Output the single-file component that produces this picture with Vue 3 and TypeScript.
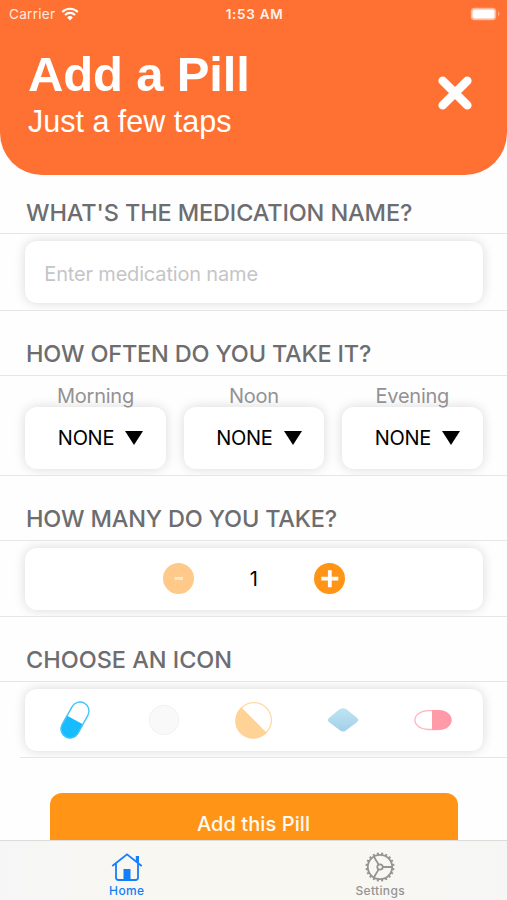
<script setup lang="ts">
import { ref } from 'vue'

const medication = ref('')
const count = ref(1)
const selectedIcon = ref('capsule')
const times: string[] = ['Morning', 'Noon', 'Evening']
const icons: string[] = ['capsule', 'round', 'split', 'diamond', 'oval']

const teeth: number[] = Array.from({ length: 20 }, (_, i) => i * 18 + 9)

function changeCount(delta: number): void {
  count.value = Math.max(1, count.value + delta)
}
</script>

<template>
  <div class="screen">
    <header class="hero">
      <div class="status">
        <div class="carrier">
          <span>Carrier</span>
          <svg class="wifi" viewBox="0 0 18 14" width="18" height="14">
            <path d="M1.2 5 A11 11 0 0 1 16.8 5" />
            <path d="M4 8 A7 7 0 0 1 14 8" />
            <path class="dot" d="M9 13.4 L6.1 10.4 A4.2 4.2 0 0 1 11.9 10.4 Z" />
          </svg>
        </div>
        <span class="clock">1:53 AM</span>
        <svg class="battery" viewBox="0 0 30 14" width="30" height="14">
          <rect x=".8" y=".8" width="25.4" height="12.4" rx="3.8" />
          <rect class="level" x="2.5" y="2.5" width="22" height="9" rx="2" />
          <path d="M28 4.8 Q30.6 7 28 9.2 Z" />
        </svg>
      </div>
      <div class="heading">
        <div>
          <h1>Add a Pill</h1>
          <p>Just a few taps</p>
        </div>
        <button class="close" aria-label="Close">
          <svg viewBox="0 0 34 34" width="34" height="34"><path d="M4.7 4.7 L29.3 29.3 M29.3 4.7 L4.7 29.3" /></svg>
        </button>
      </div>
    </header>

    <main class="form">
      <h2 class="q-name">What's the medication name?</h2>
      <div class="row name">
        <div class="card field">
          <input v-model="medication" placeholder="Enter medication name" />
        </div>
      </div>

      <h2 class="q-often">How often do you take it?</h2>
      <div class="row times">
        <div v-for="time in times" :key="time" class="time">
          <span class="label">{{ time }}</span>
          <button class="card select">
            <span>NONE</span>
            <svg viewBox="0 0 18 14" width="18" height="14"><path d="M0 0 H18 L9 14 Z" /></svg>
          </button>
        </div>
      </div>

      <h2 class="q-many">How many do you take?</h2>
      <div class="row">
        <div class="card stepper">
          <button class="step" :class="{ disabled: count <= 1 }" aria-label="Less" @click="changeCount(-1)">
            <svg viewBox="0 0 31 31" width="31" height="31"><path class="minus" d="M11.5 15.5 H20" /></svg>
          </button>
          <span class="count">{{ count }}</span>
          <button class="step" aria-label="More" @click="changeCount(1)">
            <svg viewBox="0 0 31 31" width="31" height="31"><path d="M7.3 15.7 H24.3 M15.8 7.2 V24.2" /></svg>
          </button>
        </div>
      </div>

      <h2 class="q-icon">Choose an icon</h2>
      <div class="row last">
        <div class="card icons">
          <button v-for="icon in icons" :key="icon" :aria-label="icon" @click="selectedIcon = icon">
            <svg v-if="icon === 'capsule'" viewBox="0 0 40 40" width="40" height="40">
              <g transform="translate(20 20) rotate(29)">
                <path d="M-9.5 0 V10 A9.5 9.5 0 0 0 9.5 10 V0 Z" fill="#17bcff" />
                <rect x="-9" y="-19.3" width="18" height="38.6" rx="9" fill="none" stroke="#42c4fb" stroke-width="1.4" />
              </g>
            </svg>
            <svg v-else-if="icon === 'round'" viewBox="0 0 40 40" width="40" height="40">
              <circle cx="20" cy="20" r="14.8" fill="#f9f9f9" stroke="#f1f1f1" />
            </svg>
            <svg v-else-if="icon === 'split'" viewBox="0 0 40 40" width="40" height="40">
              <circle cx="20" cy="20" r="17.4" fill="#fff" stroke="#ffdaaa" stroke-width="1.3" />
              <path d="M7.3 7.3 A18 18 0 1 0 32.7 32.7 Z" fill="#ffd296" />
            </svg>
            <svg v-else-if="icon === 'diamond'" viewBox="0 0 40 40" width="40" height="40">
              <defs>
                <linearGradient id="gem" x1="0" y1="0" x2="0" y2="1">
                  <stop offset="0" stop-color="#bde5f3" />
                  <stop offset="1" stop-color="#a4cfe8" />
                </linearGradient>
              </defs>
              <path d="M16.5 9.3 Q20 7 23.5 9.3 L33.5 17.4 Q36.8 20 33.5 22.5 L23.5 30 Q20 33 16.5 30 L6.5 22.5 Q3.2 20 6.5 17.4 Z" fill="url(#gem)" />
            </svg>
            <svg v-else viewBox="0 0 40 40" width="40" height="40">
              <rect x="1.9" y="10.7" width="36.2" height="18.8" rx="13" ry="9.4" fill="#fff" stroke="#ffb3bd" stroke-width="1.3" />
              <path d="M19 10.1 H25 C43 10.1 43 30.1 25 30.1 H19 Z" fill="#ff9ba9" />
            </svg>
          </button>
        </div>
      </div>

      <button class="submit"><span>Add this Pill</span></button>
    </main>

    <nav class="tabs">
      <a class="tab active">
        <svg viewBox="0 0 32 30" width="32" height="30">
          <path d="M1.3 14 L16 2.3 L30.7 14 M5 11.5 V25.5 Q5 28 7.5 28 H24.5 Q27 28 27 25.5 V11.5 M26.3 10 V4.5" />
          <path class="solid" d="M12.5 17 H19.5 V28 H12.5 Z M24.8 4 H28 V11 L24.8 8.7 Z" />
        </svg>
        <span>Home</span>
      </a>
      <a class="tab">
        <svg viewBox="0 0 32 30" width="32" height="30">
          <g transform="translate(16 15)">
            <circle r="12.2" />
            <circle r="2.7" />
            <path d="M3 0 H12 M-1.5 -2.6 L-6.2 -10.5 M-1.5 2.6 L-6.2 10.5" />
            <path v-for="angle in teeth" :key="angle" class="tooth" d="M12.3 0 H14.5" :transform="`rotate(${angle})`" />
          </g>
        </svg>
        <span>Settings</span>
      </a>
    </nav>
  </div>
</template>

<style>
body {
  margin: 0;
  background: #fff;
}
</style>

<style scoped>
.screen {
  display: flex;
  flex-direction: column;
  width: 507px;
  height: 900px;
  overflow: hidden;
  background: #fefefe;
  font-family: Inter, "Liberation Sans", sans-serif;
}
h1, h2, p { margin: 0; white-space: nowrap; }
button { padding: 0; border: 0; background: none; color: inherit; font: inherit; }
svg { display: block; flex: none; }
.hero {
  flex: none;
  box-sizing: border-box;
  height: 175px;
  border-radius: 0 0 42px 42px;
  background: #ff7133;
  color: #fff;
}
.status {
  display: grid;
  grid-template-columns: 1fr auto 1fr;
  align-items: center;
  height: 27px;
  padding: 0 7px 0 9px;
  font-size: 13.5px;
}
.carrier { display: flex; align-items: center; gap: 6px; color: #ffe9df; font-size: 13.6px; letter-spacing: .25px; }
.wifi { fill: none; stroke: #fff; stroke-width: 2.1; }
.wifi .dot { fill: #fff; stroke: none; }
.clock { font-weight: 600; letter-spacing: .7px; color: #fff3ed; }
.battery { justify-self: end; fill: #ffb597; }
.battery .level { fill: #fff; }
.heading {
  display: flex;
  justify-content: space-between;
  padding: 19px 35px 0 28px;
}
h1 {
  font: bold 49px/56px "Liberation Sans", Arial, sans-serif;
  letter-spacing: -.15px;
}
.heading p {
  font: 30.5px/38px "Liberation Sans", Arial, sans-serif;
}
.close { align-self: flex-start; margin-top: 30px; }
.close path { fill: none; stroke: #fff; stroke-width: 8.6; stroke-linecap: round; }

.form {
  display: flex;
  flex: 1;
  flex-direction: column;
  min-height: 0;
  overflow: hidden;
}
h2 {
  flex: none;
  box-sizing: border-box;
  height: 64px;
  padding: 21px 0 0 26px;
  color: #6d6d70;
  font-size: 23.5px;
  font-weight: 550;
  line-height: 43px;
  letter-spacing: -.18px;
  text-transform: uppercase;
}
.q-name { height: 58px; padding-top: 16px; letter-spacing: -.13px; }
.q-icon { letter-spacing: -.03px; }
.row {
  flex: none;
  box-sizing: border-box;
  height: 77px;
  padding: 7px 24.5px 0 25.3px;
  border-top: 1px solid #e6e6e7;
  border-bottom: 1px solid #e6e6e7;
  overflow: hidden;
}
.name { height: 78px; }
.card {
  box-sizing: border-box;
  height: 61.5px;
  border-radius: 12px;
  background: #fff;
  box-shadow: 0 0 12px rgba(0, 0, 0, .15);
}
.field { display: flex; align-items: center; padding: 4px 19px 0; }
.field input {
  width: 100%;
  padding: 0;
  border: 0;
  outline: 0;
  background: none;
  font: 20px/26px Inter, sans-serif;
  letter-spacing: -.17px;
}
.field input::placeholder { color: #c5c5c7; opacity: 1; }
.times { display: grid; grid-template-columns: repeat(3, 1fr); gap: 18px; height: 101px; padding-top: 8px; }
.time { display: flex; flex-direction: column; }
.label { position: relative; z-index: 1; height: 23px; color: #929294; font-size: 20px; line-height: 24px; letter-spacing: -.25px; text-align: center; }
.select { display: flex; flex: none; align-items: center; justify-content: center; gap: 11px; padding-left: 10px; width: 100%; color: #000; font-size: 20px; letter-spacing: -.3px; }
.stepper { display: flex; align-items: center; justify-content: center; gap: 54px; font-size: 20px; }
.count { width: 12px; text-align: center; }
.step { border-radius: 50%; background: #ff9417; }
.step.disabled { background: #ffc98a; }
.step path { fill: none; stroke: #fff; stroke-width: 3.8; }
.step .minus { stroke: #ffe6ca; stroke-width: 3; }
.icons { display: grid; grid-template-columns: repeat(5, 89.6px); align-items: center; justify-content: center; }
.icons button { justify-self: center; }
.last { border-bottom: 0; }
.last::after { content: ""; display: block; height: 1px; margin: 6.5px -25px 0 -5px; background: #e6e6e7; }
.submit {
  flex: none;
  align-self: center;
  width: 408px;
  height: 62px;
  margin-top: 35px;
  border-radius: 12px;
  background: #ff9417;
  color: #fffaf2;
  font-size: 20px;
  font-weight: 550;
  letter-spacing: .08px;
}
.tabs {
  display: grid;
  flex: none;
  grid-template-columns: 1fr 1fr;
  box-sizing: border-box;
  height: 60px;
  border-top: 1px solid #dcdcda;
  background: linear-gradient(90deg, #f6f6f7 0, #f8f7f1 26%, #f8f7f1 72%, #f6f6f6 100%);
  color: #949492;
}
.tab { display: flex; flex-direction: column; align-items: center; padding-top: 11px; font-size: 12px; font-weight: 550; line-height: 18px; letter-spacing: .35px; }
.tab svg { fill: none; stroke: currentColor; stroke-width: 1.8; }
.tab .solid { fill: currentColor; stroke: none; }
.tab .tooth { stroke-width: 2; }
.active { color: #147efb; }
</style>
